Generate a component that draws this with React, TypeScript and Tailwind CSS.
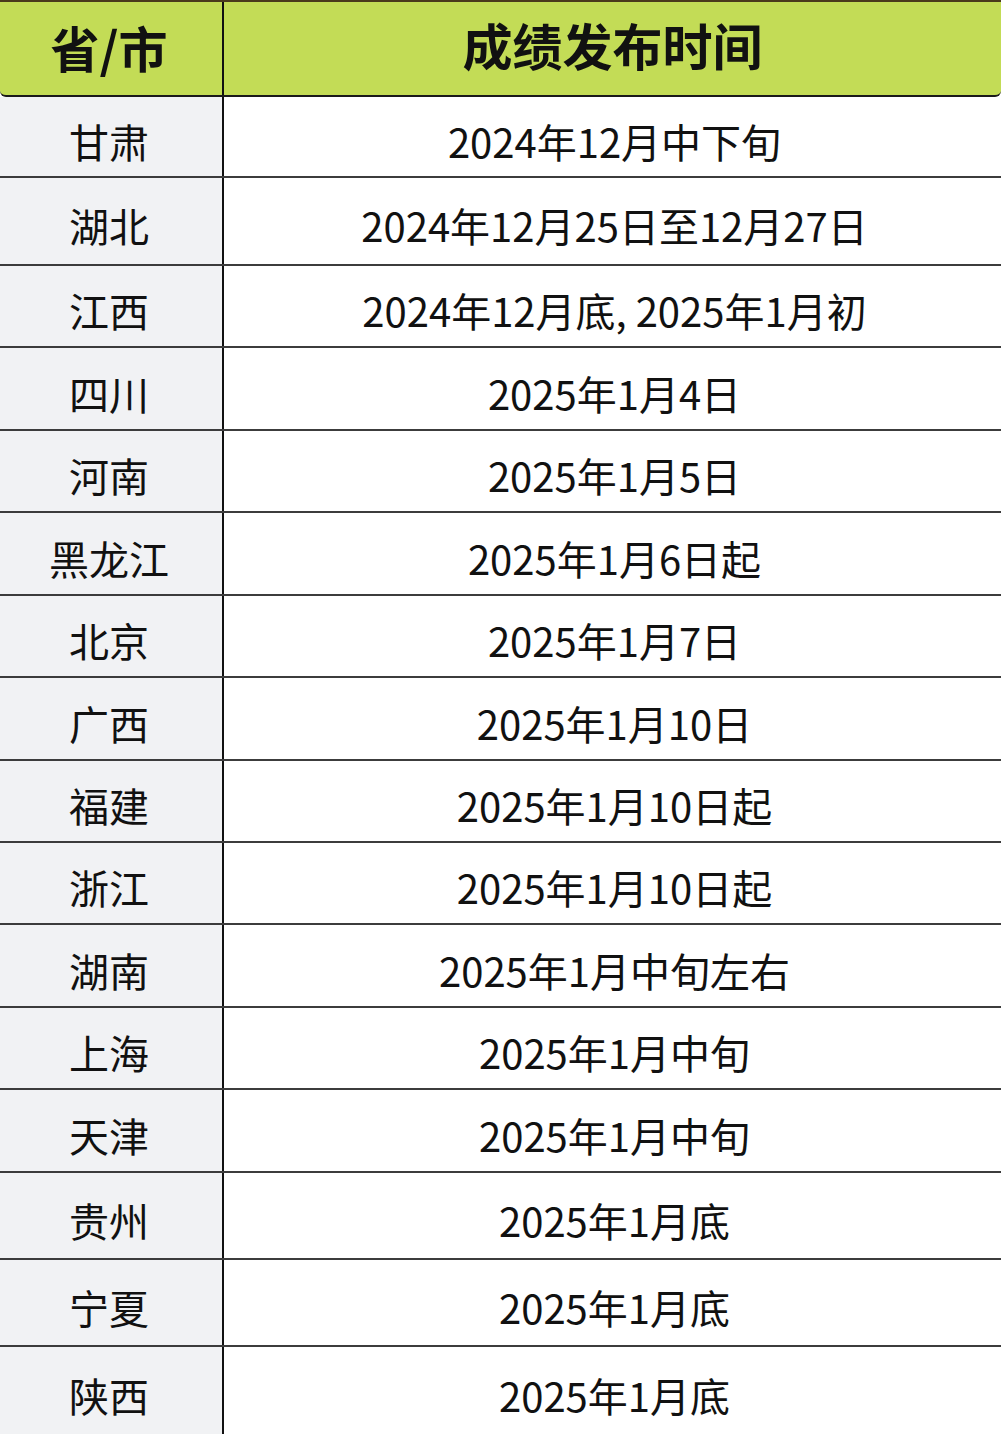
const ROWS: { p: string; t: string; h: string }[] = [
  { p: "甘肃", t: "2024年12月中下旬", h: "h-[81px]" },
  { p: "湖北", t: "2024年12月25日至12月27日", h: "h-[88px]" },
  { p: "江西", t: "2024年12月底, 2025年1月初", h: "h-[82px]" },
  { p: "四川", t: "2025年1月4日", h: "h-[83px]" },
  { p: "河南", t: "2025年1月5日", h: "h-[82px]" },
  { p: "黑龙江", t: "2025年1月6日起", h: "h-[83px]" },
  { p: "北京", t: "2025年1月7日", h: "h-[82px]" },
  { p: "广西", t: "2025年1月10日", h: "h-[83px]" },
  { p: "福建", t: "2025年1月10日起", h: "h-[82px]" },
  { p: "浙江", t: "2025年1月10日起", h: "h-[82px]" },
  { p: "湖南", t: "2025年1月中旬左右", h: "h-[83px]" },
  { p: "上海", t: "2025年1月中旬", h: "h-[82px]" },
  { p: "天津", t: "2025年1月中旬", h: "h-[83px]" },
  { p: "贵州", t: "2025年1月底", h: "h-[87px]" },
  { p: "宁夏", t: "2025年1月底", h: "h-[87px]" },
  { p: "陕西", t: "2025年1月底", h: "h-[87px]" },
];

export default function App() {
  return (
    <div
      className="w-[1001px] h-[1434px] overflow-hidden bg-white text-[#111]"
      style={{ fontFamily: '"Noto Sans CJK SC", "Noto Sans", sans-serif' }}
    >
      <div className="flex h-[97px] bg-[#c3dc56] border-t-2 border-[#4a3a1c] border-b-2 border-b-[#1a1a1a] rounded-b-[6px]">
        <div className="w-[224px] shrink-0 border-r-2 border-[#111] flex items-center justify-center text-[49px] font-bold pb-1 pr-1">
          省/市
        </div>
        <div className="flex-1 flex items-center justify-center text-[50px] font-bold pb-2">
          成绩发布时间
        </div>
      </div>
      {ROWS.map((r, i) => (
        <div
          key={i}
          className={`flex ${r.h} ${i < ROWS.length - 1 ? "border-b-2 border-[#3c3c3c]" : ""}`}
        >
          <div className="w-[224px] shrink-0 bg-[#f1f2f4] border-r-2 border-[#111] flex items-center justify-center text-[40px] font-normal pt-2 pr-1">
            {r.p}
          </div>
          <div className="flex-1 flex items-center justify-center text-[40px] font-normal pt-2 pl-1">
            {r.t}
          </div>
        </div>
      ))}
    </div>
  );
}
